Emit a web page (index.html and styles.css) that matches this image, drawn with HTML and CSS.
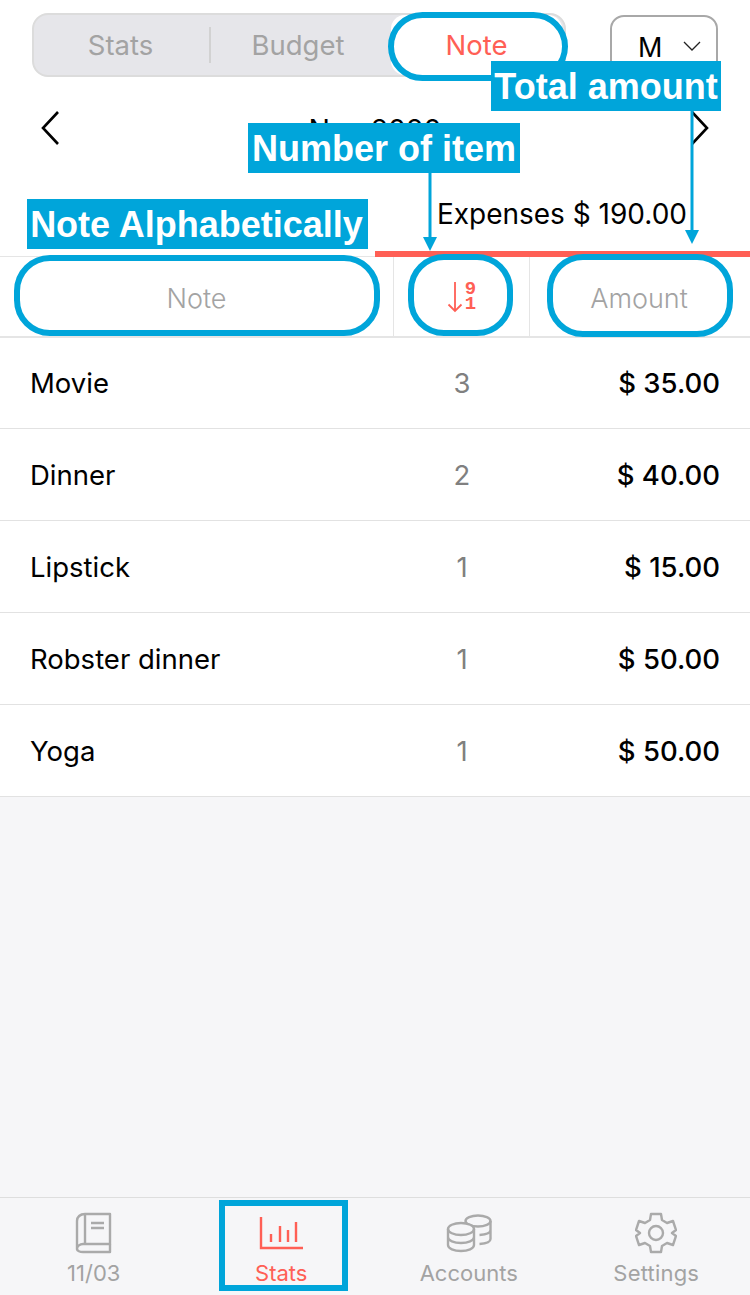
FILE: index.html
```html
<!DOCTYPE html>
<html lang="en">
<head>
  <meta charset="UTF-8">
  <meta name="viewport" content="width=device-width, initial-scale=1.0">
  <title>Note Stats</title>
  <link rel="stylesheet" href="styles.css">
</head>
<body>
<div id="app">

  <div class="topbar">
    <div class="segment">
      <div class="seg-item seg-first">Stats</div>
      <div class="seg-item seg-divider">Budget</div>
      <div class="seg-item seg-active">Note</div>
    </div>
    <div class="period">M
      <svg width="18" height="10" viewBox="0 0 18 10"><path d="M1 1l8 8 8-8" fill="none" stroke="#222" stroke-width="1.3"/></svg>
    </div>
  </div>

  <div class="month">
    <svg width="20" height="36" viewBox="0 0 20 36"><path d="M18 2L3 18l15 16" fill="none" stroke="#000" stroke-width="2.6"/></svg>
    <span class="month-name">Nov 2020</span>
    <svg width="20" height="36" viewBox="0 0 20 36"><path d="M2 2l15 16L2 34" fill="none" stroke="#000" stroke-width="2.6"/></svg>
  </div>

  <div class="summary">Expenses $ 190.00</div>

  <div class="tab-line"><div class="tab-line-red"></div></div>

  <div class="table-head">
    <div class="col-note">Note</div>
    <div class="col-count">
      <svg width="16" height="32" viewBox="0 0 16 32"><path d="M8 1v29M1.500 23.500L8 30l6.500-6.500" fill="none" stroke="#ff5f55" stroke-width="1.8"/></svg>
      <div class="sort-digits">9<br>1</div>
    </div>
    <div class="col-amount">Amount</div>
  </div>

  <div class="rows">
    <div class="row"><div class="col-note">Movie</div><div class="col-count">3</div><div class="col-amount">$ 35.00</div></div>
    <div class="row"><div class="col-note">Dinner</div><div class="col-count">2</div><div class="col-amount">$ 40.00</div></div>
    <div class="row"><div class="col-note">Lipstick</div><div class="col-count">1</div><div class="col-amount">$ 15.00</div></div>
    <div class="row"><div class="col-note">Robster dinner</div><div class="col-count">1</div><div class="col-amount">$ 50.00</div></div>
    <div class="row"><div class="col-note">Yoga</div><div class="col-count">1</div><div class="col-amount">$ 50.00</div></div>
  </div>

  <div class="tabbar">
    <div class="tab">
      <svg width="38" height="42" viewBox="0 0 38 42" fill="none" stroke="#aaa" stroke-width="2.4" stroke-linejoin="round">
        <path d="M10 2h25v30H8c-3 0-6 2-6 5V9c0-4 3-7 8-7z"/>
        <path d="M10 2v30M35 32v8H8c-3 0-6-1-6-3"/>
        <path d="M16 11h13M16 16h13"/>
      </svg>
      <span>11/03</span>
    </div>
    <div class="tab tab-active">
      <svg class="icon-stats" width="44" height="33" viewBox="0 0 44 33" fill="none" stroke="#ff5f55" stroke-width="2.4">
        <path d="M2 0v31h42"/>
        <path d="M12 17v8M21 9v16M29 13v12M37 5v20"/>
      </svg>
      <span>Stats</span>
    </div>
    <div class="tab">
      <svg class="icon-coins" width="46" height="40" viewBox="0 0 46 40" fill="none" stroke="#aaa" stroke-width="2.4">
        <ellipse cx="32" cy="8" rx="12.5" ry="5.5"/>
        <path d="M44.500 8v18c0 2.500-4 4.500-11 5M44.500 17c0 2.500-4 4.500-11 5"/>
        <ellipse cx="15" cy="16" rx="13" ry="6" fill="#f6f6f8"/>
        <path d="M2 16v16c0 3.500 6 6 13 6s13-2.500 13-6V16M2 24c0 3.500 6 6 13 6s13-2.500 13-6"/>
      </svg>
      <span>Accounts</span>
    </div>
    <div class="tab">
      <svg width="42" height="42" viewBox="0 0 42 42" fill="none" stroke="#aaa" stroke-width="2.4" stroke-linejoin="round">
        <path d="M16 2h10l1 6 5 3 6-2 3 9-4 3 4 3-3 9-6-2-5 3-1 6H16l-1-6-5-3-6 2-3-9 4-3-4-3 3-9 6 2 5-3z"/>
        <circle cx="21" cy="21" r="7"/>
      </svg>
      <span class="tab-wide">Settings</span>
    </div>
  </div>

  <!-- annotations on top of the screenshot -->
  <div class="ring ring-tab"></div>
  <div class="ring ring-note"></div>
  <div class="ring ring-sort"></div>
  <div class="ring ring-amount"></div>
  <div class="box-stats"></div>
  <div class="label label-total">Total amount</div>
  <div class="label label-number">Number of item</div>
  <div class="label label-alpha">Note Alphabetically</div>
  <svg class="arrow arrow-number" width="16" height="78" viewBox="0 0 16 78"><path d="M8 0v68" stroke="#00a5da" stroke-width="3"/><path d="M1 64h14l-7 14z" fill="#00a5da"/></svg>
  <svg class="arrow arrow-total" width="16" height="133" viewBox="0 0 16 133"><path d="M8 0v122" stroke="#00a5da" stroke-width="3"/><path d="M1 119h14l-7 14z" fill="#00a5da"/></svg>
</div>
</body>
</html>
```

FILE: styles.css
```css
* {
  box-sizing: border-box;
}

body {
  margin: 0;
  font-family: Inter, "Noto Sans", sans-serif;
  background-color: #f6f6f8;
}

#app {
  position: relative;
  width: 750px;
  height: 1295px;
  overflow: hidden;
  display: flex;
  flex-direction: column;
}

.topbar {
  height: 92px;
  background: #fff;
  display: flex;
  padding: 13px 32px 0;
  justify-content: space-between;
  align-items: flex-start;
}

.segment {
  width: 534px;
  height: 64px;
  display: flex;
  align-items: center;
  background: #e6e6ea;
  border: 2px solid #dcdcdc;
  border-radius: 16px;
  font-size: 27.5px;
  color: #a3a3a3;
}

.seg-item {
  text-align: center;
}

.seg-first {
  width: 175px;
  padding-right: 2px;
}

.seg-divider {
  width: 178px;
  padding-right: 2px;
  border-left: 2px solid #d2d2d2;
  line-height: 36px;
}

.seg-active {
  width: 171px;
  height: 60px;
  margin: 0 2px 0 4px;
  line-height: 61px;
  background: #fff;
  border-radius: 14px;
  color: #ff5f55;
}

.period {
  width: 108px;
  height: 76px;
  margin-top: 2px;
  padding: 14px 0 0 26px;
  border: 2px solid #a8a8a8;
  border-radius: 14px;
  font-size: 27px;
  color: #000;
}

.period svg {
  margin-left: 13px;
  vertical-align: 6px;
}

.month {
  height: 72px;
  background: #fff;
  display: flex;
  align-items: center;
  justify-content: space-between;
  padding: 0 40px;
  font-size: 28.5px;
  color: #000;
}

.month-name {
  padding-top: 2px;
}

.summary {
  height: 87px;
  background: #fff;
  padding: 31px 63px 0 0;
  text-align: right;
  font-size: 28px;
  line-height: 38px;
}

.tab-line {
  height: 6px;
  background: #fff;
  border-bottom: 1px solid #e5e5e5;
  display: flex;
  justify-content: flex-end;
}

.tab-line-red {
  width: 375px;
  height: 6px;
  background: #ff5f55;
}

.table-head {
  height: 81px;
  display: flex;
  background: #fff;
  border-bottom: 2px solid #e5e5e5;
  font-size: 27px;
  font-weight: 300;
  color: #a3a3a3;
}

.table-head > div {
  display: flex;
  align-items: center;
  justify-content: center;
  padding-top: 4px;
}

.table-head .col-count {
  border-left: 1px solid #e5e5e5;
  border-right: 1px solid #e5e5e5;
  gap: 2px;
  padding-top: 0;
}

.table-head .col-amount {
  padding-right: 2px;
}

.col-note {
  width: 393px;
}

.col-count {
  width: 137px;
  text-align: center;
}

.col-amount {
  flex: 1;
}

.sort-digits {
  font-family: "Liberation Mono", monospace;
  font-size: 19px;
  font-weight: 700;
  line-height: 15px;
  color: #ff5f55;
}

.rows {
  background: #fff;
}

.row {
  height: 92px;
  display: flex;
  align-items: center;
  border-bottom: 1px solid #e2e2e2;
  font-size: 27.5px;
  color: #000;
}

.row:first-child {
  height: 91px;
}

.row .col-note {
  padding-left: 30px;
}

.row .col-count {
  color: #808080;
  padding-left: 1px;
}

.row .col-amount {
  padding-right: 30px;
  text-align: right;
  font-weight: 500;
}

.tabbar {
  margin-top: auto;
  height: 98px;
  border-top: 1px solid #dedede;
  display: flex;
  background: #f6f6f8;
}

.tab {
  flex: 1;
  display: flex;
  flex-direction: column;
  align-items: center;
  justify-content: flex-end;
  padding-bottom: 9px;
  font-size: 22px;
  color: #a3a3a3;
  gap: 6px;
}

.tab span {
  line-height: 26px;
}

.tab-wide {
  letter-spacing: 0.2px;
}

.tab-active {
  color: #ff5f55;
}

.icon-stats {
  margin-bottom: 4px;
}

.icon-coins {
  margin-bottom: 1px;
}

/* annotation overlay */
.ring {
  position: absolute;
  border: 6px solid #00a5da;
  border-radius: 36px;
}

.ring-tab {
  left: 388px;
  top: 12px;
  width: 180px;
  height: 69px;
}

.ring-note {
  left: 14px;
  top: 255px;
  width: 366px;
  height: 81px;
}

.ring-sort {
  left: 408px;
  top: 254px;
  width: 105px;
  height: 82px;
}

.ring-amount {
  left: 547px;
  top: 254px;
  width: 186px;
  height: 83px;
}

.box-stats {
  position: absolute;
  left: 219px;
  top: 1200px;
  width: 129px;
  height: 91px;
  border: 6px solid #00a5da;
}

.label {
  position: absolute;
  height: 50px;
  background: #00a5da;
  color: #fff;
  font-family: "Liberation Sans", Arial, sans-serif;
  font-size: 36px;
  font-weight: 700;
  line-height: 51px;
  text-align: center;
  white-space: nowrap;
}

.label-total {
  left: 491px;
  top: 61px;
  width: 230px;
}

.label-number {
  left: 248px;
  top: 123px;
  width: 272px;
}

.label-alpha {
  left: 27px;
  top: 199px;
  width: 341px;
  padding-right: 2px;
}

.arrow {
  position: absolute;
}

.arrow-number {
  left: 422px;
  top: 173px;
}

.arrow-total {
  left: 684px;
  top: 111px;
}
```
